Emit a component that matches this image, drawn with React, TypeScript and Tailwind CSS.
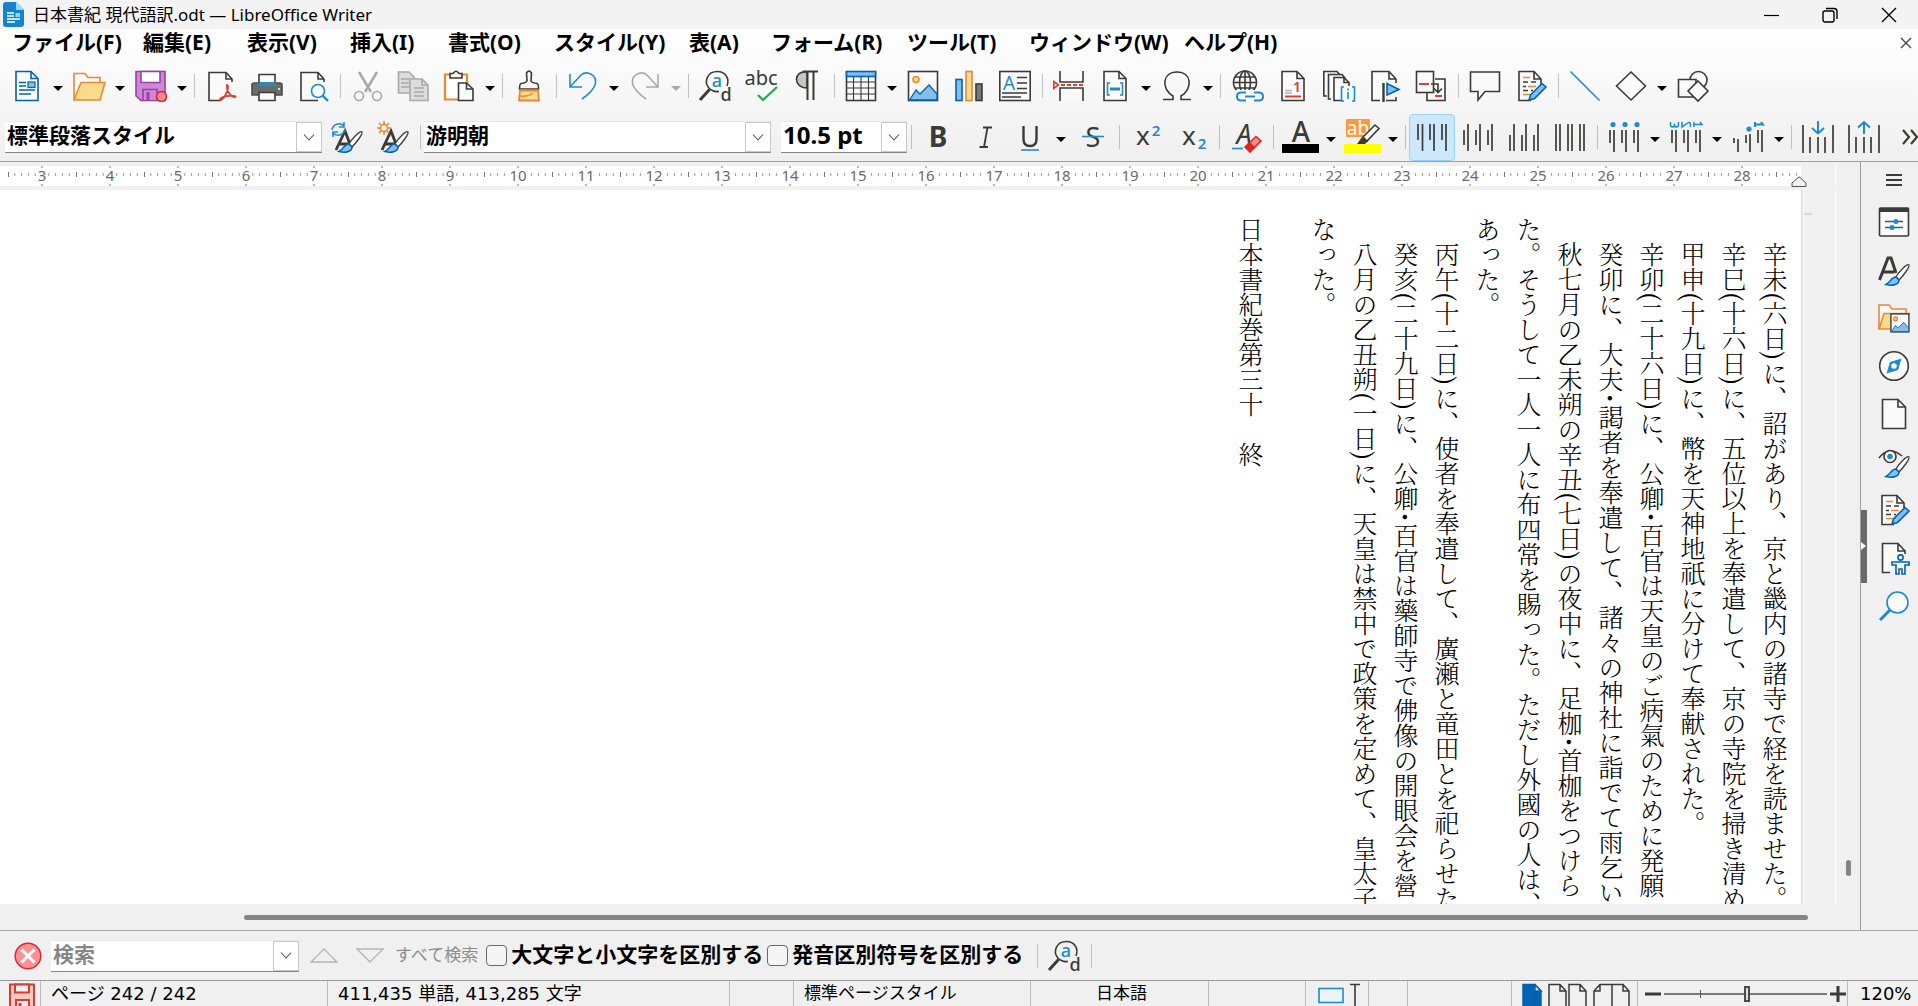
import type { ReactNode } from "react";

const UI = "font-['Noto_Sans','Noto_Sans_CJK_JP',sans-serif]";
const D = "#3a3a38";
const G = "#a8a8a8";
const B = "#1e8bcd";
const BF = "#83beec";
const DB = "#0063b1";
const O = "#ed8733";
const OF = "#f8db8f";
const R = "#e03c31";

const PAGE = "M5 1.5H20L27 8.5V30.5H5Z";
const FOLD = "M20 1.5V8.5H27";

function Icon({ children, stroke = D }: { children: ReactNode; stroke?: string }) {
    return (
        <svg viewBox="0 0 32 32" className="w-8 h-8 shrink-0 overflow-visible" fill="none" stroke={stroke} strokeWidth="1.6" aria-hidden="true">
            {children}
        </svg>
    );
}

function Glyph({ x, y, size, fill = D, weight = 400, italic = false, children }: { x: number; y: number; size: number; fill?: string; weight?: number; italic?: boolean; children: string }) {
    return (
        <text x={x} y={y} fontSize={size} fill={fill} stroke="none" fontWeight={weight} fontStyle={italic ? "italic" : "normal"} fontFamily="Noto Sans, sans-serif" textAnchor="middle">
            {children}
        </text>
    );
}

function Tool({ label, active, children }: { label: string; active?: boolean; children: ReactNode }) {
    return (
        <button
            type="button"
            aria-label={label}
            className={`flex w-[46px] h-[47px] shrink-0 items-center justify-center rounded-sm border ${active ? "border-[#99d1ff] bg-[#cce8ff]" : "border-transparent"}`}
        >
            {children}
        </button>
    );
}

function Arrow({ label, disabled }: { label: string; disabled?: boolean }) {
    return (
        <button type="button" aria-label={`${label}オプション`} disabled={disabled} className="flex w-4 h-10 shrink-0 items-center justify-center">
            <svg viewBox="0 0 10 5" className="w-[10px] h-[5px] mt-1" fill={disabled ? G : "#000"}>
                <path d="M0 0H10L5 5Z" />
            </svg>
        </button>
    );
}

function Sep() {
    return (
        <div className="flex w-2 shrink-0 justify-center">
            <div className="w-px h-6 bg-[#c0c0c0]" />
        </div>
    );
}

function Combo({ label, value, placeholder, box, text }: { label: string; value?: string; placeholder?: string; box: string; text: string }) {
    return (
        <div className={`flex shrink-0 h-8 border-t border-t-[#e8e8e8] border-b border-b-[#868686] bg-white ${box}`}>
            <input aria-label={label} defaultValue={value} placeholder={placeholder} className={`min-w-0 flex-1 bg-transparent pl-0.5 pb-1 outline-none ${text}`} />
            <button type="button" aria-label={`${label}の一覧`} className="flex w-[26px] items-center justify-center border border-[#c8c8c8] bg-white">
                <svg viewBox="0 0 12 7" className="w-3 h-[7px]" fill="none" stroke="#555" strokeWidth="1.1">
                    <path d="M1 0.5L6 6L11 0.5" />
                </svg>
            </button>
        </div>
    );
}

function FindIcon() {
    return (
        <Icon>
            <path d="M28 16C31 8 26 1.500 18.500 1.500C8 1.500 5 12 9.500 17.500C12 20.500 16 22 20 21.500" />
            <path d="M10.500 19.500L1 30" strokeWidth="3" />
            <Glyph x={18} y={17} size={18} fill={B} weight={500}>a</Glyph>
            <Glyph x={27} y={31} size={18} weight={500}>d</Glyph>
        </Icon>
    );
}

function BrushStroke() {
    return (
        <>
            <path d="M31 11C29 9 20 19 18 23L21 26C25 22 32 13 31 11Z" fill="#fff" stroke={D} strokeWidth="1.3" />
            <path d="M18 23C13 23 13 28 8 30.500C14 32 21 31 21 26Z" fill={BF} stroke={DB} strokeWidth="1.5" />
        </>
    );
}

function LetterBrush() {
    return (
        <>
            <path d="M1.500 26L10 4H13L18 19M5 18H16" strokeWidth="3" />
            <BrushStroke />
        </>
    );
}

function Picture() {
    return (
        <>
            <rect x="1.500" y="1.500" width="29" height="29" fill="#fafafa" />
            <circle cx="9" cy="9.500" r="3" fill={OF} stroke={O} />
            <path d="M2.500 30L9 20L13 24L22 15L30 24V30Z" fill={BF} stroke={DB} strokeWidth="1.300" />
        </>
    );
}

function NotePage() {
    return (
        <>
            <path d="M26 14V9L19 1.500H4V30.500H16" fill="#fafafa" />
            <path d="M19 1.500V9H26" />
            <path d="M8 7.500H15M13 16.500H21M8 24.500H15" stroke={O} />
            <path d="M8 12H13M16 12H21M8 16.500H11M8 20.500H13M16 20.500H18" />
            <path d="M14 30L15.500 25L27 13.500L31 17L19.500 28.500Z" fill={BF} stroke={DB} />
        </>
    );
}

// vertical text alignment icons: [x, top, bottom] per line
function Bars({ lines }: { lines: number[][] }) {
    return (
        <>
            {lines.map(([x, a, b], i) => (
                <path key={i} d={`M${x} ${a}V${b}`} strokeWidth="1.700" />
            ))}
        </>
    );
}

const menus = [
    { label: "ファイル(F)", w: "w-[131px]" },
    { label: "編集(E)", w: "w-[104px]" },
    { label: "表示(V)", w: "w-[103px]" },
    { label: "挿入(I)", w: "w-[98px]" },
    { label: "書式(O)", w: "w-[106px]" },
    { label: "スタイル(Y)", w: "w-[135px]" },
    { label: "表(A)", w: "w-[82px]" },
    { label: "フォーム(R)", w: "w-[136px]" },
    { label: "ツール(T)", w: "w-[122px]" },
    { label: "ウィンドウ(W)", w: "w-[155px]" },
    { label: "ヘルプ(H)", w: "w-[110px]" },
];

const paragraphs = [
    "　辛未(六日)に、詔があり、京と畿内の諸寺で経を読ませた。",
    "　辛巳(十六日)に、五位以上を奉遣して、京の寺院を掃き清め",
    "　甲申(十九日)に、幣を天神地祇に分けて奉献された。",
    "　辛卯(二十六日)に、公卿･百官は天皇のご病氣のために発願",
    "　癸卯に、大夫･謁者を奉遣して、諸々の神社に詣でて雨乞い",
    "　秋七月の乙未朔の辛丑(七日)の夜中に、足枷･首枷をつけら",
    "た。そうして一人一人に布四常を賜った。ただし外國の人は、",
    "あった。",
    "　丙午(十二日)に、使者を奉遣して、廣瀬と竜田とを祀らせた",
    "　癸亥(二十九日)に、公卿･百官は藥師寺で佛像の開眼会を營",
    "　八月の乙丑朔(一日)に、天皇は禁中で政策を定めて、皇太子",
    "なった。",
];

function TitleBar() {
    return (
        <header className="flex h-[29px] shrink-0 items-center bg-[#f3f3f3] pl-[3px] text-black">
            <svg viewBox="0 0 22 25" className="w-[22px] h-[25px]">
                <path d="M3 0H13L21 8V22Q21 25 18 25H3Q0 25 0 22V3Q0 0 3 0Z" fill="#1385cf" />
                <path d="M13 0L21 8H13Z" fill="#8fdcf7" />
                <path d="M4 11H11M4 14H11M4 17H17M4 20H12" stroke="#fff" strokeWidth="1.3" />
                <path d="M12.500 11H17V15H12.500Z" fill="#8fdcf7" />
            </svg>
            <h1 className="flex-1 pl-2 text-[17px] font-normal">日本書紀 現代語訳.odt — LibreOffice Writer</h1>
            <div className="flex h-full items-center">
                <button type="button" aria-label="最小化" className="flex w-[59px] justify-center">
                    <svg viewBox="0 0 16 16" className="w-4 h-4" stroke="#000" strokeWidth="1.2"><path d="M1 8.500H16" /></svg>
                </button>
                <button type="button" aria-label="元に戻す" className="flex w-[59px] justify-center">
                    <svg viewBox="0 0 16 16" className="w-4 h-4" fill="none" stroke="#000" strokeWidth="1.4">
                        <rect x="1" y="4" width="11" height="11" rx="2" />
                        <path d="M4 1.500H12Q15 1.500 15 4.500V12" />
                    </svg>
                </button>
                <button type="button" aria-label="閉じる" className="flex w-[59px] justify-center">
                    <svg viewBox="0 0 16 16" className="w-4 h-4" stroke="#000" strokeWidth="1.4"><path d="M1 1L15 15M15 1L1 15" /></svg>
                </button>
            </div>
        </header>
    );
}

function StandardToolbar() {
    return (
        <div className="flex h-14 shrink-0 items-center pl-1 pt-0.5">
            <Tool label="新規作成">
                <Icon stroke={DB}>
                    <path d={PAGE} fill="#fafafa" />
                    <path d={FOLD} />
                    <path d="M8 12.500H15M8 16H15M8 20H24M8 24H20" strokeWidth="1.5" />
                    <rect x="17" y="12" width="7" height="5.500" fill={BF} strokeWidth="1.2" />
                </Icon>
            </Tool>
            <Arrow label="新規作成" />
            <Tool label="開く">
                <Icon stroke={O}>
                    <path d="M1 30V3.500H12L15 7.500H27V13" fill="#fafafa" />
                    <path d="M1 30L8 12.500H32L27 30Z" fill={OF} />
                </Icon>
            </Tool>
            <Arrow label="開く" />
            <Tool label="保存">
                <Icon stroke="#9a3fa8">
                    <path d="M1 1.500H30V30.500H6L1 26Z" fill="#cf87d6" />
                    <path d="M6 1.500H25V12.500H6Z" fill="#fff" />
                    <path d="M8 30V19.500H22V30" fill="#cf87d6" />
                    <path d="M13 22V30" strokeWidth="3" />
                    <circle cx="26.500" cy="26.500" r="5" fill="#f98b8b" stroke="#d02a2a" />
                </Icon>
            </Tool>
            <Arrow label="保存" />
            <Sep />
            <Tool label="PDFとしてエクスポート">
                <Icon>
                    <path d="M27 12V9L21 2.500H4V30.500H16" fill="#fafafa" />
                    <path d="M21 2.500V9H27" />
                    <path d="M22 15C23.500 15 23.500 20 20.500 25C18.500 29 15 31 15 29.500C15 26.500 28 24.500 30.500 26.500C29.500 28.500 21 24 22 15Z" stroke={R} strokeWidth="1.800" />
                </Icon>
            </Tool>
            <Tool label="印刷">
                <Icon>
                    <path d="M8 14V4.500H24V14" fill="#fafafa" />
                    <path d="M1 15Q1 13 3 13H29Q31 13 31 15V25H1Z" fill="#6b6b68" stroke="#4c4c49" />
                    <path d="M7 12.500H25V16H7Z" fill={B} stroke="none" />
                    <path d="M8 22.500H24V30.500H8Z" fill="#fafafa" />
                    <path d="M27 19H29" stroke="#fff" />
                </Icon>
            </Tool>
            <Tool label="印刷プレビュー">
                <Icon>
                    <path d="M27 12V9L21 2.500H4V30.500H21" fill="#fafafa" />
                    <path d="M21 2.500V9H27" />
                    <circle cx="21" cy="21" r="6.500" fill="#fafafa" stroke={B} />
                    <path d="M25.500 25.500L31 31" stroke={B} strokeWidth="2.4" />
                </Icon>
            </Tool>
            <Sep />
            <Tool label="切り取り">
                <Icon stroke={G}>
                    <path d="M8 2L20 22M26 2L14 22" strokeWidth="2.5" />
                    <circle cx="8" cy="26" r="4.500" />
                    <circle cx="26" cy="26" r="4.500" />
                </Icon>
            </Tool>
            <Tool label="コピー">
                <Icon stroke={G}>
                    <path d="M1.500 2H12L17 7V23H1.500Z" fill="#dcdcdc" />
                    <path d="M4 9H12M4 13H12M4 17H12" />
                    <path d="M13 9H25L31 15V30.500H13Z" fill="#dcdcdc" />
                    <path d="M25 9V15H31M17 18H27M17 22H27M17 26H27" />
                </Icon>
            </Tool>
            <Tool label="貼り付け">
                <Icon stroke={O}>
                    <path d="M24 14V4.500H2V29.500H15" fill="#fff" strokeWidth="2.2" />
                    <path d="M7 8V3.500H10Q13 -1 16 3.500H19V8Z" fill="#fafafa" stroke={D} />
                    <path d="M15.500 13H23.500L30 19V30.500H15.500Z" fill="#fafafa" stroke={D} />
                    <path d="M23.500 13V19H30" stroke={D} />
                </Icon>
            </Tool>
            <Arrow label="貼り付け" />
            <Sep />
            <Tool label="書式のコピー">
                <Icon>
                    <path d="M14 11L13.500 3Q16 -1 18.500 3L18 11Q19 13 24 13.500Q25.500 14 25.500 19H6.500Q6.500 14 8 13.500Q13 13 14 11Z" fill="#fafafa" />
                    <path d="M7 20.500H25L26 30.500H6Z" fill={OF} stroke={O} strokeWidth="1.8" />
                    <path d="M7 26Q15 27 20 23" stroke={O} />
                </Icon>
            </Tool>
            <Sep />
            <Tool label="元に戻す">
                <Icon stroke={B}>
                    <path d="M3 4V17H15" />
                    <path d="M3 17L14 5C20 0 31 5 28 15Q26 21 15 29" />
                </Icon>
            </Tool>
            <Arrow label="元に戻す" />
            <Tool label="やり直し">
                <Icon stroke={G}>
                    <path d="M29 4V17H17" />
                    <path d="M29 17L18 5C12 0 1 5 4 15Q6 21 17 29" />
                </Icon>
            </Tool>
            <Arrow label="やり直し" disabled />
            <Sep />
            <Tool label="検索と置換"><FindIcon /></Tool>
            <Tool label="スペルチェック">
                <svg viewBox="0 0 36 32" className="w-9 h-8 shrink-0 overflow-visible" fill="none" aria-hidden="true">
                    <Glyph x={18} y={15} size={20}>abc</Glyph>
                    <path d="M15 25L20 30L34 17" stroke="#18ab50" strokeWidth="2.2" />
                </svg>
            </Tool>
            <Tool label="編集記号">
                <Icon>
                    <path d="M16 2C2 0 2 18 16 18Z" fill="#c8c6c4" stroke={D} />
                    <path d="M12 1.500H27M16.500 1V30M22.500 1V30" strokeWidth="2" />
                </Icon>
            </Tool>
            <Sep />
            <Tool label="表の挿入">
                <Icon>
                    <rect x="1.500" y="2" width="29" height="28.500" fill="#fafafa" />
                    <path d="M8.500 7V30M16 7V30M23.500 7V30M2 12H30M2 18H30M2 24H30" strokeWidth="1.1" />
                    <rect x="1.500" y="1.500" width="29" height="5" fill={BF} stroke={DB} />
                </Icon>
            </Tool>
            <Arrow label="表の挿入" />
            <Tool label="画像の挿入"><Icon><Picture /></Icon></Tool>
            <Tool label="グラフの挿入">
                <Icon>
                    <rect x="3" y="9.500" width="6" height="21" fill={BF} stroke={DB} />
                    <rect x="13" y="1.500" width="6" height="29" fill={OF} stroke={O} />
                    <rect x="23" y="14" width="6" height="16.500" fill="#797774" stroke={D} />
                </Icon>
            </Tool>
            <Tool label="テキストボックスの挿入">
                <Icon>
                    <rect x="0.800" y="1.500" width="30.400" height="29" fill="#fafafa" />
                    <Glyph x={10} y={20} size={19} fill={B}>A</Glyph>
                    <path d="M18 7.500H28M18 13H28M18 18.500H28M3 23H28M3 27H22" strokeWidth="1.3" />
                </Icon>
            </Tool>
            <Sep />
            <Tool label="改ページ">
                <Icon>
                    <path d="M7 1V12H30V1M7 31V18H30V31" fill="#fafafa" />
                    <path d="M8 15H31" stroke={R} strokeDasharray="4 2" strokeWidth="1.9" />
                    <path d="M0.800 11.500L5.500 15L0.800 18.500Z" stroke={R} />
                </Icon>
            </Tool>
            <Tool label="フィールドの挿入">
                <Icon>
                    <path d={PAGE} fill="#fafafa" />
                    <path d={FOLD} />
                    <path d="M11 13H8.500V25H11M21 13H23.500V25H21" stroke={B} />
                    <path d="M11 19H21" stroke={B} strokeWidth="3" />
                </Icon>
            </Tool>
            <Arrow label="フィールドの挿入" />
            <Tool label="特殊文字の挿入">
                <Icon>
                    <path d="M2 29.500H12V26C0 19 1 2 16 2C31 2 32 19 20 26V29.500H30" />
                </Icon>
            </Tool>
            <Arrow label="特殊文字の挿入" />
            <Sep />
            <Tool label="ハイパーリンクの挿入">
                <Icon>
                    <circle cx="14" cy="12.500" r="11.500" fill="#fafafa" />
                    <ellipse cx="14" cy="12.500" rx="5.500" ry="11.500" />
                    <path d="M14 1V24M2.500 12.500H25.500M4 7H24M4 18H24" />
                    <path d="M5 20H33V32H5Z" fill="#fafafa" stroke="none" />
                    <path d="M15 22.500H10Q6 22.500 6 26.500T10 30.500H15M23 22.500H28Q32 22.500 32 26.500T28 30.500H23M14 26.500H24" stroke={B} strokeWidth="2" />
                </Icon>
            </Tool>
            <Tool label="脚注の挿入">
                <Icon>
                    <path d={PAGE} fill="#fafafa" />
                    <path d={FOLD} />
                    <Glyph x={20} y={22} size={14} fill={R} weight={600}>1</Glyph>
                    <path d="M8 20.500H15M8 23H15" stroke="#b5b5b5" strokeWidth="1.3" />
                    <path d="M8 26.500H24" stroke={R} strokeWidth="2" />
                </Icon>
            </Tool>
            <Tool label="相互参照の挿入">
                <Icon>
                    <path d="M4 26H0.800V1.500H14L17 5M8 29H5.500V4.500H19L22 8" />
                    <path d="M18 30.500H11V7.500H21L26 12.500V16" fill="#fafafa" />
                    <path d="M21 7.500V12.500H26" />
                    <path d="M21 17H18.500V31H21M29 17H31.500V31H29M25 22V29M25 18.500V20.500" stroke={B} />
                </Icon>
            </Tool>
            <Tool label="ブックマークの挿入">
                <Icon>
                    <path d="M27 13V9L20 1.500H3V30.500H11M17 30.500H27V27" fill="#fafafa" />
                    <path d="M20 1.500V9H27" />
                    <path d="M14.500 13V32" strokeWidth="2.4" />
                    <path d="M18 13.500L30 19.500L18 25Z" fill={BF} stroke={DB} />
                </Icon>
            </Tool>
            <Tool label="参照">
                <Icon>
                    <path d="M12 14V30.500H30V9H20" fill="#fafafa" />
                    <rect x="1.500" y="1.500" width="17" height="21" fill="#fafafa" />
                    <path d="M4 14H14M20 26H27" stroke={R} strokeWidth="2" />
                    <path d="M16 14H23V22M19 18.500L23 22.500L27 18.500" />
                </Icon>
            </Tool>
            <Sep />
            <Tool label="コメントの挿入">
                <Icon><path d="M1.500 2H30.500V21.500H16L9 30V21.500H1.500Z" fill="#fafafa" /></Icon>
            </Tool>
            <Tool label="変更の記録"><Icon><NotePage /></Icon></Tool>
            <Sep />
            <Tool label="線の挿入"><Icon stroke={B}><path d="M1.500 1.500L30.500 30.500" /></Icon></Tool>
            <Tool label="基本図形"><Icon><path d="M16 2L30.500 16L16 30L1.500 16Z" fill="#fafafa" /></Icon></Tool>
            <Arrow label="基本図形" />
            <Tool label="図形描画機能">
                <Icon>
                    <circle cx="21.500" cy="10" r="8.500" fill="#fafafa" />
                    <path d="M1.500 9.500H19V27H1.500Z" fill="#fafafa" />
                    <path d="M21 11L31 21L21 31L11 21Z" fill="#fafafa" />
                </Icon>
            </Tool>
        </div>
    );
}

function FormattingToolbar() {
    return (
        <div className="flex h-12 shrink-0 items-center pl-[5px]">
            <Combo label="段落スタイル" value="標準段落スタイル" box="w-[317px]" text="text-[21px] leading-7 font-bold" />
            <div className="w-0.5 shrink-0" />
            <Tool label="スタイルの更新">
                <Icon>
                    <path d="M5 29L14 10L19 23M8 23H18" strokeWidth="2.8" />
                    <BrushStroke />
                    <path d="M1 9A7 7 0 0 1 13 5M13 1V6H8M14 8A7 7 0 0 1 2 12M2 16V11H7" stroke={B} />
                </Icon>
            </Tool>
            <Tool label="新規スタイル">
                <Icon>
                    <path d="M5 29L14 10L19 23M8 23H18" strokeWidth="2.8" />
                    <BrushStroke />
                    <circle cx="7" cy="7" r="3.500" fill="#fafafa" stroke={O} />
                    <path d="M7 0V3M7 11V14M0 7H3M11 7H14M2 2L4 4M12 2L10 4M2 12L4 10M12 12L10 10" stroke={O} />
                </Icon>
            </Tool>
            <Sep />
            <Combo label="フォント名" value="游明朝" box="w-[347px]" text="text-[21px] leading-7 font-bold" />
            <div className="w-2.5 shrink-0" />
            <Combo label="フォントサイズ" value="10.5 pt" box="w-[126px]" text="text-[24px] leading-7 font-bold" />
            <Sep />
            <Tool label="太字"><Icon><Glyph x={16} y={26} size={28} weight={700}>B</Glyph></Icon></Tool>
            <Tool label="斜体">
                <Icon><path d="M15 6.500H24M11.500 26H20M19.500 6.500L16 26" strokeWidth="1.8" /></Icon>
            </Tool>
            <Tool label="下線">
                <Icon>
                    <path d="M9.500 5V18Q9.500 25 16 25T22.500 18V5" strokeWidth="2.4" />
                    <path d="M7 29H25" stroke={B} strokeWidth="1.6" />
                </Icon>
            </Tool>
            <Arrow label="下線" />
            <Tool label="取り消し線">
                <Icon>
                    <Glyph x={17} y={26} size={27}>S</Glyph>
                    <path d="M6 15.500H28" stroke={B} strokeWidth="1.6" />
                </Icon>
            </Tool>
            <Sep />
            <Tool label="上付き文字">
                <Icon>
                    <Glyph x={13} y={24} size={26}>x</Glyph>
                    <Glyph x={26} y={15} size={15} fill={B} weight={600}>2</Glyph>
                </Icon>
            </Tool>
            <Tool label="下付き文字">
                <Icon>
                    <Glyph x={13} y={24} size={26}>x</Glyph>
                    <Glyph x={26} y={28} size={15} fill={B} weight={600}>2</Glyph>
                </Icon>
            </Tool>
            <Sep />
            <Tool label="書式のクリア">
                <Icon>
                    <Glyph x={14} y={23} size={27} italic>A</Glyph>
                    <path d="M2 27.500H13" stroke={B} strokeWidth="1.6" />
                    <path d="M15 26L26 15.500L31 20L20 31Z" fill="#ff8f8f" stroke="#e0261c" />
                    <path d="M15 26L20 21L25 26L20 31Z" fill="#e0261c" stroke="none" />
                </Icon>
            </Tool>
            <Sep />
            <Tool label="文字色">
                <svg viewBox="0 0 37 36" className="w-[37px] h-9 shrink-0 overflow-visible">
                    <Glyph x={19} y={23} size={28} weight={500}>A</Glyph>
                    <path d="M0 25H37V34H0Z" fill="#000" />
                </svg>
            </Tool>
            <Arrow label="文字色" />
            <Tool label="蛍光ペンの色">
                <svg viewBox="0 0 37 36" className="w-[37px] h-9 shrink-0 overflow-visible">
                    <rect x="2" y="0" width="24" height="18" rx="1" fill="#ff9a3c" />
                    <Glyph x={14} y={16} size={19} fill="#fff">ab</Glyph>
                    <path d="M19 18L31 6L35 9.500L23 22Z" fill="#fafafa" stroke={D} strokeWidth="1.6" />
                    <path d="M13 25L18 18L24 22L21 25Z" fill={D} />
                    <path d="M0 25H37V34H0Z" fill="#ff0" />
                </svg>
            </Tool>
            <Arrow label="蛍光ペンの色" />
            <Sep />
            <Tool label="上揃え" active>
                <Icon><Bars lines={[[2, 3, 19], [6.5, 3, 30], [14, 3, 19], [18, 3, 30], [26, 3, 19], [30, 3, 30]]} /></Icon>
            </Tool>
            <Tool label="中央揃え">
                <Icon><Bars lines={[[2, 9, 24], [6, 3, 30], [14, 9, 24], [18, 3, 30], [26, 9, 24], [30, 3, 30]]} /></Icon>
            </Tool>
            <Tool label="下揃え">
                <Icon><Bars lines={[[2, 14, 30], [6, 3, 30], [14, 14, 30], [18, 3, 30], [26, 14, 30], [30, 3, 30]]} /></Icon>
            </Tool>
            <Tool label="両端揃え">
                <Icon><Bars lines={[[2, 3, 30], [6, 3, 30], [14, 3, 30], [18, 3, 30], [26, 3, 30], [30, 3, 30]]} /></Icon>
            </Tool>
            <Sep />
            <Tool label="箇条書き">
                <Icon>
                    <g fill={B} stroke="none"><circle cx="5" cy="3.500" r="2.600" /><circle cx="17" cy="3.500" r="2.600" /><circle cx="29" cy="3.500" r="2.600" /></g>
                    <Bars lines={[[2, 9, 22], [6, 9, 31], [14, 9, 22], [18, 9, 31], [26, 9, 22], [30, 9, 31]]} />
                </Icon>
            </Tool>
            <Arrow label="箇条書き" />
            <Tool label="番号付け">
                <Icon>
                    <g stroke={B} strokeWidth="1.500">
                        <path d="M0.500 1V3.500Q0.500 6 2.500 6T4.500 3.500V2.500V3.500Q4.500 6 6.500 6T8.500 3.500V1" />
                        <path d="M12 1V6L17 2.500Q20.500 0 20.500 4V6" />
                        <path d="M24 1V6M24 3.500H32L30 1" />
                    </g>
                    <Bars lines={[[2, 9, 22], [6, 9, 31], [14, 9, 22], [18, 9, 31], [26, 9, 22], [30, 9, 31]]} />
                </Icon>
            </Tool>
            <Arrow label="番号付け" />
            <Tool label="アウトライン">
                <Icon>
                    <circle cx="17" cy="8" r="2.600" fill={B} stroke="none" />
                    <path d="M23 1V6M23 3.500H31L29 1" stroke={B} strokeWidth="2" />
                    <Bars lines={[[2, 17, 22], [6, 18, 31], [14, 14, 22], [18, 13, 31], [26, 9, 22], [30, 9, 31]]} />
                </Icon>
            </Tool>
            <Arrow label="アウトライン" />
            <Sep />
            <Tool label="段落間隔を増やす">
                <Icon>
                    <path d="M16 0V12M10 7L16 12.500L22 7" stroke={B} strokeWidth="2" />
                    <Bars lines={[[1, 4, 32], [8, 16, 32], [16, 16, 32], [23, 16, 32], [31, 4, 32]]} />
                </Icon>
            </Tool>
            <Tool label="段落間隔を減らす">
                <Icon>
                    <path d="M16 13V1M10 6.500L16 1L22 6.500" stroke={B} strokeWidth="2" />
                    <Bars lines={[[1, 4, 32], [8, 16, 32], [16, 16, 32], [23, 16, 32], [31, 4, 32]]} />
                </Icon>
            </Tool>
            <button type="button" aria-label="その他" className="ml-auto shrink-0">
                <svg viewBox="0 0 16 16" className="w-4 h-4" fill="none" stroke={D} strokeWidth="2.2"><path d="M1 1L7 8L1 15M9 1L15 8L9 15" /></svg>
            </button>
        </div>
    );
}

function RulerCell({ n }: { n?: number }) {
    const ticks = [-4, -3, -2, -1, 1, 2, 3, 4].filter((k) => n === undefined || n < 10 || Math.abs(k) > 1);
    return (
        <div className="relative w-[68px] h-5 shrink-0 text-center text-[15px] leading-[18px] text-[#6a6a6a]">
            <svg viewBox="0 0 68 20" className="absolute inset-0 w-[68px] h-5" stroke="#9a9a9a" aria-hidden="true">
                {ticks.map((k) => <path key={k} d={`M${34 + k * 6.8} 7V10`} />)}
                <path d="M0.500 6V11M34 0V2M34 18V20" stroke="#777" />
            </svg>
            {n}
        </div>
    );
}

function Ruler() {
    return (
        <div className="flex h-7 shrink-0 py-1">
            <div className="flex flex-1 overflow-hidden bg-white">
                <div className="w-2 shrink-0" />
                {Array.from({ length: 26 }, (_, i) => <RulerCell key={i} n={i + 3} />)}
                <RulerCell />
            </div>
            <div className="relative w-[35px] shrink-0 border-r border-white">
                <svg viewBox="0 0 16 11" className="absolute -left-2.5 top-2.5 w-4 h-[11px]" fill="#f0f0f0" stroke="#555"><path d="M8 0.800L15 7V10.500H1V7Z" /></svg>
            </div>
        </div>
    );
}

function Paragraph({ text }: { text: string }) {
    return (
        <p>
            {text.split(/([()])/).map((part, i) => (part === "(" || part === ")" ? <span key={i} className="py-px font-medium">{part}</span> : part))}
        </p>
    );
}

function Document() {
    return (
        <div className="flex min-w-0 flex-1 flex-col">
            <Ruler />
            <div className="flex min-h-0 flex-1">
                <div className="flex flex-1 min-w-0 justify-end overflow-hidden bg-white border-r-2 border-[#e2e2e2]">
                    <article lang="ja" className="h-full shrink-0 pt-[27px] pr-1.5 [writing-mode:vertical-rl] whitespace-nowrap text-[25px] leading-[41px] font-light text-black font-['Noto_Serif_CJK_JP','Noto_Sans_CJK_JP',serif]">
                        {paragraphs.map((t) => <Paragraph key={t} text={t} />)}
                        <p className="mr-8">日本書紀巻第三十　終</p>
                    </article>
                </div>
                <div className="w-[33px] shrink-0 border-x border-white">
                    <div className="h-[25px] w-2 border-b-2 border-[#d8d8d8]" />
                </div>
            </div>
        </div>
    );
}

function Sidebar() {
    return (
        <div className="flex w-[58px] shrink-0 border-l border-[#9d9d9d]">
            <button type="button" aria-label="サイドバーを隠す" className="flex h-[73px] w-1.5 shrink-0 self-center items-center bg-[#696969]">
                <svg viewBox="0 0 5 8" className="w-[5px] h-2" fill="#fff"><path d="M0 0L5 4L0 8Z" /></svg>
            </button>
            <nav className="flex flex-1 flex-col items-center gap-4 pl-0.5">
                <button type="button" aria-label="サイドバーの設定" className="flex h-9 w-8 items-center justify-center">
                    <svg viewBox="0 0 16 12" className="w-4 h-3" stroke={D} strokeWidth="1.8"><path d="M0 1H16M0 6H16M0 11H16" /></svg>
                </button>
                <button type="button" aria-label="プロパティ" className="-mt-2">
                    <Icon>
                        <rect x="1.500" y="2" width="29" height="28" rx="1" fill="#fafafa" />
                        <path d="M1.500 4H30.500" strokeWidth="4" />
                        <path d="M7 15.500H25M7 21.500H25" stroke="#2f5d86" />
                        <circle cx="18" cy="15.500" r="2.500" fill={B} stroke="none" /><circle cx="14" cy="21.500" r="2.500" fill={B} stroke="none" />
                    </Icon>
                </button>
                <button type="button" aria-label="スタイル"><Icon><LetterBrush /></Icon></button>
                <button type="button" aria-label="ギャラリー">
                    <Icon stroke={O}>
                        <path d="M1 27V3H11L14 7H28V12" fill="#fafafa" />
                        <path d="M1 27L6 11.500H31L27 27Z" fill={OF} />
                        <g transform="translate(12 11) scale(0.620)" stroke={D} strokeWidth="2.2"><Picture /></g>
                    </Icon>
                </button>
                <button type="button" aria-label="ナビゲーター">
                    <Icon>
                        <circle cx="16" cy="16" r="14.300" fill="#fafafa" />
                        <path d="M23.500 8.500L20 20L8.500 23.500L12 12Z" fill={B} stroke="none" />
                        <circle cx="16" cy="16" r="2.800" fill="#fafafa" stroke="none" />
                    </Icon>
                </button>
                <button type="button" aria-label="ページ"><Icon><path d="M4.500 1.500H20L27.500 9V30.500H4.500Z" fill="#fafafa" /><path d="M20 1.500V9H27.500" /></Icon></button>
                <button type="button" aria-label="スタイルインスペクター">
                    <Icon>
                        <path d="M1 12Q11 -1 24 10" />
                        <circle cx="12" cy="10.500" r="6" fill="#fafafa" />
                        <circle cx="12" cy="10.500" r="2.800" fill={B} stroke="none" />
                        <BrushStroke />
                    </Icon>
                </button>
                <button type="button" aria-label="変更の管理"><Icon><NotePage /></Icon></button>
                <button type="button" aria-label="アクセシビリティチェック">
                    <Icon>
                        <path d="M27 12V9L20 1.500H4.500V30.500H12" fill="#fafafa" />
                        <path d="M20 1.500V9H27" />
                        <circle cx="22.500" cy="15.500" r="2.600" fill="#fafafa" stroke={DB} />
                        <path d="M14 20H31V23H27V32H24V27H21V32H18V23H14Z" fill="#fafafa" stroke={DB} />
                    </Icon>
                </button>
                <button type="button" aria-label="検索">
                    <Icon stroke={B}>
                        <circle cx="19.500" cy="12.500" r="10.500" fill="#fafafa" />
                        <path d="M12 20L2 30" strokeWidth="3" />
                    </Icon>
                </button>
            </nav>
        </div>
    );
}

function FindBar() {
    return (
        <div className="flex h-[50px] shrink-0 items-center border-b border-[#9a9a9a] pl-2">
            <button type="button" aria-label="検索バーを閉じる" className="w-[43px] shrink-0 pl-1.5">
                <svg viewBox="0 0 28 28" className="w-7 h-7" fill="#ff8f97" stroke="#d92b2b" strokeWidth="1.5">
                    <circle cx="14" cy="14" r="12.800" />
                    <path d="M7.500 7.500L20.500 20.500M20.500 7.500L7.500 20.500" stroke="#fff" strokeWidth="3" />
                </svg>
            </button>
            <Combo label="検索" placeholder="検索" box="w-[248px]" text="text-[21px] leading-7 font-bold placeholder:text-[#868686]" />
            <button type="button" aria-label="前を検索" disabled className="flex w-[50px] shrink-0 justify-center">
                <svg viewBox="0 0 28 15" className="w-7 h-[15px]" fill="none" stroke="#b5b5b5" strokeWidth="1.4"><path d="M14 1L27 14H1Z" /></svg>
            </button>
            <button type="button" aria-label="次を検索" disabled className="flex w-[42px] shrink-0 justify-center">
                <svg viewBox="0 0 28 15" className="w-7 h-[15px]" fill="none" stroke="#b5b5b5" strokeWidth="1.4"><path d="M14 14L27 1H1Z" /></svg>
            </button>
            <button type="button" disabled className="shrink-0 pb-0.5 pl-1 pr-2 text-[17px] text-[#8c8c8c]">すべて検索</button>
            <input id="match-case" type="checkbox" className="size-[21px] shrink-0 appearance-none rounded border border-[#6a6a6a] bg-[#f5f5f5]" />
            <label htmlFor="match-case" className="shrink-0 pb-0.5 px-1 text-[21px] font-bold text-black">大文字と小文字を区別する</label>
            <input id="match-diacritics" type="checkbox" className="size-[21px] shrink-0 appearance-none rounded border border-[#6a6a6a] bg-[#f5f5f5]" />
            <label htmlFor="match-diacritics" className="shrink-0 pb-0.5 pl-1 pr-2.5 text-[21px] font-bold text-black">発音区別符号を区別する</label>
            <Sep />
            <Tool label="検索と置換"><FindIcon /></Tool>
            <Sep />
        </div>
    );
}

function StatusBar() {
    return (
        <footer className="flex h-[25px] shrink-0 overflow-hidden text-[18px] leading-[25px] text-black whitespace-nowrap font-['DejaVu_Sans','Noto_Sans_CJK_JP',sans-serif] [&>div]:border-r [&>div]:border-[#bdbdbd] [&>div]:shrink-0">
            <div className="w-[41px] pl-1.5 pt-0.5">
                <Icon stroke="#e0382c">
                    <path d="M4 1.500H28V31H4Z" fill="#f6c9c6" strokeWidth="2" />
                    <path d="M9 1.500H23V9.500H9ZM10 31V17H23V31" fill="#f0f0f0" strokeWidth="2" />
                    <path d="M14 20V31" strokeWidth="3" />
                </Icon>
            </div>
            <div className="w-[287px] pl-2.5">ページ 242 / 242</div>
            <div className="w-[402px] pl-2.5">411,435 単語, 413,285 文字</div>
            <div className="w-[64px]" />
            <div className="w-[237px] pl-2.5 text-[17px]">標準ページスタイル</div>
            <div className="w-[178px] pl-1 text-center text-[17px]">日本語</div>
            <div className="w-[97px]" />
            <div className="w-[63px] pl-2">
                <svg viewBox="0 0 46 25" className="w-[46px] h-[25px]" fill="none">
                    <rect x="5" y="7.500" width="24" height="14" fill="#eaf4fb" stroke={B} strokeWidth="1.6" />
                    <path d="M36 3.500H46M41 4V25" stroke={D} strokeWidth="1.6" />
                </svg>
            </div>
            <div className="w-[39px]" />
            <div className="min-w-0 flex-1" />
            <div className="w-[126px] pl-2.5">
                <svg viewBox="0 0 112 25" className="w-28 h-[25px]" fill="none" stroke={D} strokeWidth="1.5">
                    <path d="M1 3.500H13L19 10V28H1Z" fill={DB} stroke={DB} />
                    <path d="M13 4V10H19Z" fill="#fff" stroke={DB} />
                    <path d="M27 28V3.500H38L44 10V28M38 3.500V10H44M47 28V3.500H58L64 10V28M58 3.500V10H64" />
                    <path d="M90 28V3.500H78L72 10V28M78 3.500V10H72M90 28V3.500H101L107 10V28M101 3.500V10H107" />
                </svg>
            </div>
            <div className="flex w-[210px] items-center pl-1.5">
                <svg viewBox="0 0 18 18" className="w-[18px] h-[18px]" stroke={D} strokeWidth="3"><path d="M1 9H17" /></svg>
                <div className="relative mx-0.5 flex h-5 min-w-0 flex-1 items-center">
                    <input
                        type="range"
                        aria-label="ズーム"
                        min="0"
                        max="100"
                        defaultValue="51"
                        className="h-5 w-full appearance-none bg-[linear-gradient(#777,#777)] bg-[length:100%_2px] bg-center bg-no-repeat [&::-webkit-slider-thumb]:appearance-none [&::-webkit-slider-thumb]:h-4 [&::-webkit-slider-thumb]:w-1.5 [&::-webkit-slider-thumb]:border-2 [&::-webkit-slider-thumb]:border-[#4a4a4a] [&::-webkit-slider-thumb]:bg-[#ddd]"
                    />
                    <span className="absolute left-[22%] h-2 w-px bg-[#555]" />
                </div>
                <svg viewBox="0 0 18 18" className="w-[18px] h-[18px]" stroke={D} strokeWidth="3"><path d="M1 9H17M9 1V17" /></svg>
            </div>
            <span className="w-[70px] shrink-0 pl-3">120%</span>
        </footer>
    );
}

export default function App() {
    return (
        <div lang="ja" className={`flex h-screen flex-col overflow-hidden bg-[#f0f0f0] ${UI}`}>
            <TitleBar />
            <div className="flex shrink-0 flex-col border-b border-[#a0a0a0] bg-linear-to-b from-white to-[#efefef]">
                <nav className="flex h-7 items-center pl-3 text-[21px] font-bold text-black">
                    {menus.map((m) => (
                        <button key={m.label} type="button" className={`shrink-0 pb-0.5 text-left whitespace-nowrap leading-7 ${m.w}`}>{m.label}</button>
                    ))}
                    <button type="button" aria-label="文書を閉じる" className="ml-auto pr-1.5">
                        <svg viewBox="0 0 12 12" className="w-3 h-3" stroke="#444" strokeWidth="1.3"><path d="M1 1L11 11M11 1L1 11" /></svg>
                    </button>
                </nav>
                <StandardToolbar />
                <FormattingToolbar />
            </div>
            <main className="flex min-h-0 flex-1 border-b border-[#a8a8a8]">
                <div className="flex min-w-0 flex-1 flex-col">
                    <div className="flex min-h-0 flex-1">
                        <Document />
                        <div className="flex w-6 shrink-0 flex-col items-center justify-end pb-7">
                            <div className="h-4 w-[5px] rounded-full bg-[#858585]" />
                        </div>
                    </div>
                    <div className="flex h-[26px] shrink-0 items-center pl-[244px] pr-[52px]">
                        <div className="h-[5px] flex-1 rounded-full bg-[#858585]" />
                    </div>
                </div>
                <Sidebar />
            </main>
            <FindBar />
            <StatusBar />
        </div>
    );
}
